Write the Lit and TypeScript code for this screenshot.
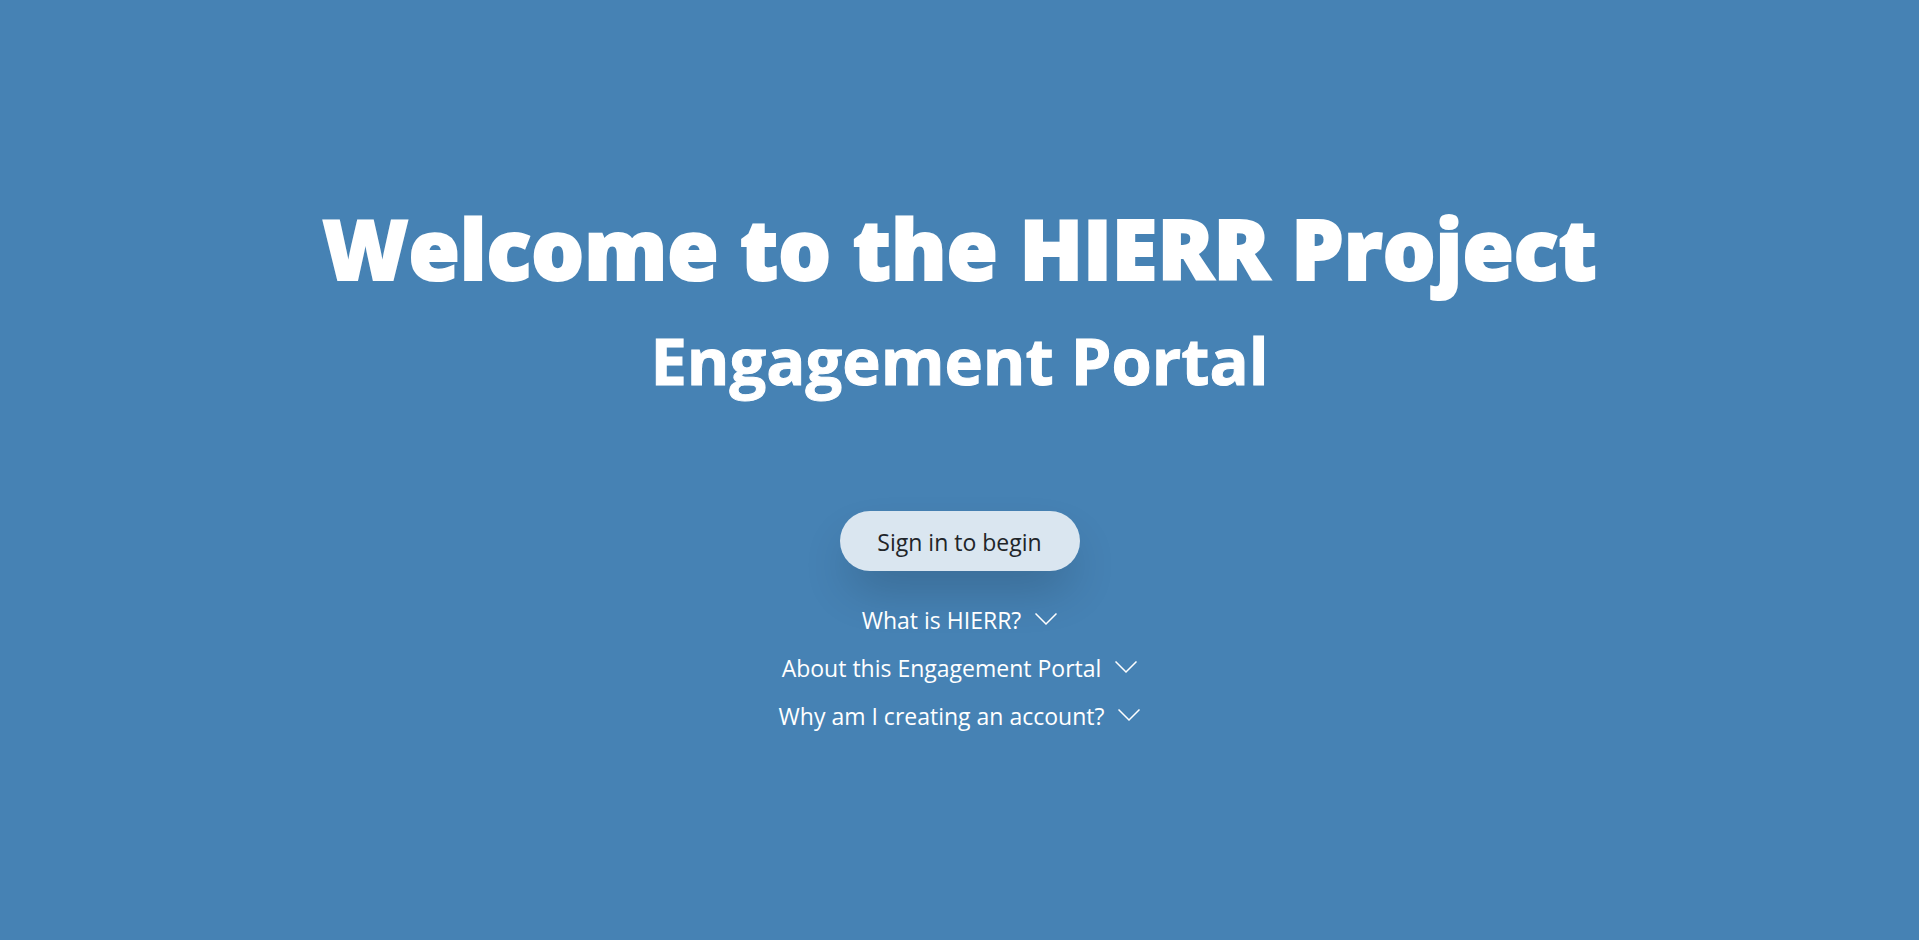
import { LitElement, html, css } from "lit";
import { customElement, state } from "lit/decorators.js";

const TOPICS = [
  "What is HIERR?",
  "About this Engagement Portal",
  "Why am I creating an account?",
];

@customElement("app-root")
export class AppRoot extends LitElement {
  static styles = css`
    :host {
      display: block;
      min-height: 100vh;
      box-sizing: border-box;
      background: #4682b4;
      color: #fff;
      font-family: "Segoe UI", "Open Sans", "Noto Sans", sans-serif;
    }
    .page {
      display: flex;
      flex-direction: column;
      align-items: center;
      padding: 188px 16px 32px;
      text-align: center;
    }
    .title {
      margin: 0 0 4px;
      font-size: 83px;
      line-height: 120px;
      font-weight: 800;
      -webkit-text-stroke: 2px currentColor;
    }
    .subtitle {
      margin: 0;
      font-size: 65px;
      line-height: 96px;
      font-weight: 700;
      -webkit-text-stroke: 1px currentColor;
    }
    .signin {
      margin: 103px 0 25px;
      padding: 2px 32px 0;
      min-width: 240px;
      height: 60px;
      border: 0;
      border-radius: 30px;
      background: #dae6f0;
      color: #212529;
      font: inherit;
      font-size: 23px;
      line-height: 58px;
      box-shadow: 0 24px 48px -8px rgba(0, 0, 0, 0.2);
      cursor: pointer;
    }
    .topic {
      display: flex;
      align-items: center;
      gap: 14px;
      padding: 0;
      border: 0;
      background: none;
      color: inherit;
      font: inherit;
      font-size: 23px;
      line-height: 48px;
      cursor: pointer;
    }
    .chevron {
      display: block;
      width: 22px;
      height: 14px;
    }
  `;

  @state() private open = -1;

  private toggle(i: number) {
    this.open = this.open === i ? -1 : i;
  }

  render() {
    return html`
      <main class="page">
        <h1 class="title">Welcome to the HIERR Project</h1>
        <h2 class="subtitle">Engagement Portal</h2>
        <button class="signin" type="button">Sign in to begin</button>
        ${TOPICS.map(
          (title, i) => html`
            <button class="topic" type="button" aria-expanded=${this.open === i ? "true" : "false"} @click=${() => this.toggle(i)}>
              <span>${title}</span>
              <svg class="chevron" viewBox="0 0 22 14" fill="none" stroke="currentColor" stroke-width="1.5" aria-hidden="true">
                <path d="M0.5 0.5 11 11 21.5 0.5" />
              </svg>
            </button>
          `
        )}
      </main>
    `;
  }
}
